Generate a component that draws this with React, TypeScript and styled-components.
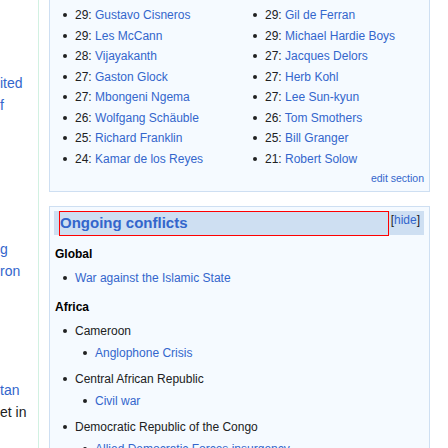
import React from "react";
import styled, { createGlobalStyle } from "styled-components";

const linkColor: string = "#3366cc";
const textColor: string = "#202122";

const GlobalStyle = createGlobalStyle`
  html, body {
    margin: 0;
    padding: 0;
    background: #ffffff;
    font-family: "Liberation Sans", Arial, sans-serif;
    color: ${textColor};
  }
`;

const Page = styled.div`
  display: flex;
  width: 448px;
  height: 448px;
  overflow: hidden;
`;

const SideColumn = styled.div`
  width: 38px;
  flex-shrink: 0;
  border-right: solid 1px #d2f1e2;
  overflow: hidden;
  font-size: 14px;
  line-height: 22px;
`;

const SideGroup = styled.div<{ $top: number }>`
  margin-top: ${(p) => p.$top}px;
`;

const SideLine = styled.div<{ $plain?: boolean }>`
  white-space: nowrap;
  color: ${(p) => (p.$plain ? textColor : linkColor)};
`;

const Main = styled.div`
  width: 381px;
  margin-left: 10px;
  flex-shrink: 0;
  display: flex;
  flex-direction: column;
  gap: 14px;
`;

const Panel = styled.div<{ $open?: boolean }>`
  box-sizing: border-box;
  background-color: #f5faff;
  border: solid 1px #cedff2;
  border-top-width: ${(p) => (p.$open ? 0 : 1)}px;
  font-size: 12px;
`;

const TopPanel = styled(Panel)`
  padding: 5px 5px 6px 5px;
`;

const Columns = styled.div`
  display: grid;
  grid-template-columns: 190px 1fr;
`;

const List = styled.ul<{ $gap?: number; $after?: number }>`
  list-style: none;
  margin: ${(p) => p.$gap || 0}px 0 ${(p) => p.$after || 0}px 0;
  padding: 0 0 0 20px;
`;

const Item = styled.li<{ $tall?: boolean }>`
  position: relative;
  line-height: ${(p) => (p.$tall ? "20.5px" : "20px")};
  white-space: nowrap;
  &::before {
    content: "";
    position: absolute;
    left: -12px;
    top: 8px;
    width: 4px;
    height: 4px;
    border-radius: 50%;
    background: ${textColor};
  }
`;

const Link = styled.a`
  color: ${linkColor};
  text-decoration: none;
`;

const EditRow = styled.div`
  text-align: right;
  font-size: 10.5px;
  line-height: 14px;
  margin-top: 2px;
  color: ${linkColor};
`;

const ConflictPanel = styled(Panel)`
  padding: 4px 5px 0 4px;
  flex: 1;
`;

const Header = styled.div`
  display: flex;
  align-items: flex-start;
  gap: 2px;
  background-color: #cedff2;
  padding: 0 4px 0 5px;
  height: 24px;
`;

const Title = styled.h2`
  box-sizing: border-box;
  flex: 1;
  margin: 0;
  height: 25px;
  border: solid 1px #ff0000;
  font-size: 15px;
  line-height: 22px;
  font-weight: bold;
  color: ${linkColor};
`;

const Toggle = styled.span`
  font-size: 12px;
  line-height: 18px;
  color: ${textColor};
  > a {
    color: ${linkColor};
  }
`;

const Body = styled.div`
  padding: 9px 0 0 1px;
`;

const Region = styled.div`
  font-weight: bold;
  line-height: 20px;
  color: #000000;
`;

type Death = { age: number; name: string };

const leftDeaths: Death[] = [
  { age: 29, name: "Gustavo Cisneros" },
  { age: 29, name: "Les McCann" },
  { age: 28, name: "Vijayakanth" },
  { age: 27, name: "Gaston Glock" },
  { age: 27, name: "Mbongeni Ngema" },
  { age: 26, name: "Wolfgang Schäuble" },
  { age: 25, name: "Richard Franklin" },
  { age: 24, name: "Kamar de los Reyes" },
];

const rightDeaths: Death[] = [
  { age: 29, name: "Gil de Ferran" },
  { age: 29, name: "Michael Hardie Boys" },
  { age: 27, name: "Jacques Delors" },
  { age: 27, name: "Herb Kohl" },
  { age: 27, name: "Lee Sun-kyun" },
  { age: 26, name: "Tom Smothers" },
  { age: 25, name: "Bill Granger" },
  { age: 21, name: "Robert Solow" },
];

function DeathList({ deaths }: { deaths: Death[] }) {
  return (
    <List>
      {deaths.map((d) => (
        <Item $tall key={d.name}>
          {d.age}: <Link href="#">{d.name}</Link>
        </Item>
      ))}
    </List>
  );
}

function App() {
  return (
    <>
      <GlobalStyle />
      <Page>
        <SideColumn>
          <SideGroup $top={72}>
            <SideLine>ited</SideLine>
            <SideLine>f</SideLine>
          </SideGroup>
          <SideGroup $top={122}>
            <SideLine>g</SideLine>
            <SideLine>ron</SideLine>
          </SideGroup>
          <SideGroup $top={97}>
            <SideLine>tan</SideLine>
            <SideLine $plain>et in</SideLine>
          </SideGroup>
        </SideColumn>
        <Main>
          <TopPanel $open>
            <Columns>
              <DeathList deaths={leftDeaths} />
              <DeathList deaths={rightDeaths} />
            </Columns>
            <EditRow>edit section</EditRow>
          </TopPanel>
          <ConflictPanel>
            <Header>
              <Title>Ongoing conflicts</Title>
              <Toggle>
                [<a>hide</a>]
              </Toggle>
            </Header>
            <Body>
              <Region>Global</Region>
              <List $gap={4} $after={9}>
                <Item>
                  <Link href="#">War against the Islamic State</Link>
                </Item>
              </List>
              <Region>Africa</Region>
              <List $gap={4}>
                <Item>
                  Cameroon
                  <List $gap={2} $after={6}>
                    <Item>
                      <Link href="#">Anglophone Crisis</Link>
                    </Item>
                  </List>
                </Item>
                <Item>
                  Central African Republic
                  <List $gap={2} $after={6}>
                    <Item>
                      <Link href="#">Civil war</Link>
                    </Item>
                  </List>
                </Item>
                <Item>
                  Democratic Republic of the Congo
                  <List $gap={2} $after={6}>
                    <Item>
                      <Link href="#">Allied Democratic Forces insurgency</Link>
                    </Item>
                  </List>
                </Item>
              </List>
            </Body>
          </ConflictPanel>
        </Main>
      </Page>
    </>
  );
}

export default App;
